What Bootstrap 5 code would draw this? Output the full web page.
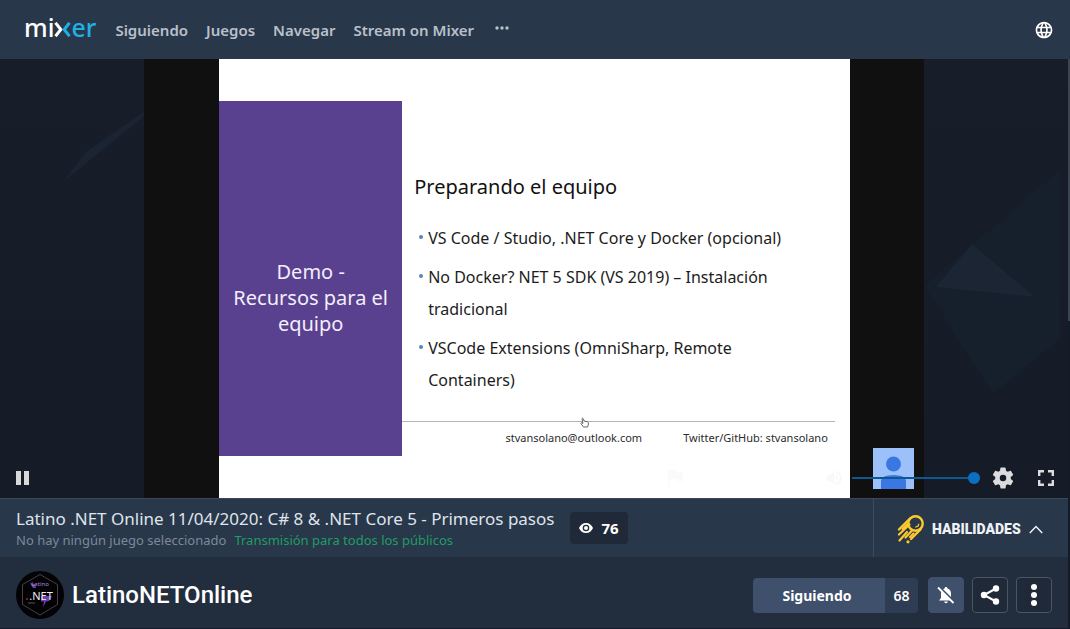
<!DOCTYPE html>
<html lang="es">
<head>
<meta charset="utf-8">
<meta name="viewport" content="width=device-width, initial-scale=1">
<title>LatinoNETOnline - Mixer</title>
<link href="https://cdn.jsdelivr.net/npm/bootstrap@5.3.0/dist/css/bootstrap.min.css" rel="stylesheet">
<style>
  body { font-family: "Noto Sans", "Open Sans", sans-serif; font-size: 14px; background: #141b28; color: #fff; }
  svg { display: block; flex: none; }
  .topbar { height: 59px; background: #29374a; padding: 0 16px 0 24px; }
  .brand { font-size: 25px; line-height: 30px; font-weight: 500; color: #fff; text-decoration: none; margin-bottom: 6px; }
  .brand svg { margin-top: 6px; }
  .brand-blue { color: #1fb0e6; }
  .topbar .nav { gap: 18px; margin-left: 19px; }
  .topbar .nav-link { font-size: 15px; line-height: 20px; font-weight: 600; color: #b9c0cb; padding: 0; }
  .page-body { margin-right: 2px; position: relative; }
  .scroll-thumb { position: absolute; top: 0; right: -2px; width: 2px; height: 262px; background: #3c4452; }
  .stage { background: linear-gradient(#171e2a, #151b27); min-height: 320px; }
  .stage-art { position: absolute; inset: 0; width: 100%; height: 100%; }
  .video { width: 73%; background: #101010; padding: 0 74px 0 75px; }
  .slide { background: #fff; color: #1c1c1c; padding: 42px 0; }
  .slide-side { width: 183px; background: #59418f; color: #f3eefb; font-size: 20px; line-height: 26px; padding-top: 38px; }
  .slide-main { padding-right: 15px; }
  .slide-text { padding: 73px 0 0 12px; }
  .slide h2 { font-size: 20px; line-height: 26px; margin: 0 0 22px; color: #111; font-weight: 400; }
  .slide li { font-size: 16px; line-height: 32px; margin-bottom: 7px; padding-left: 14px; position: relative; }
  .slide li::before { content: ""; position: absolute; left: 5px; top: 13px; width: 4px; height: 4px; border-radius: 50%; background: #5b84b8; }
  .slide-foot { border-top: 1px solid #b4b4b4; font-size: 11px; line-height: 18px; height: 35px; padding: 7px 7px 0 0; gap: 41px; color: #2c2c2c; }
  .hand { position: absolute; left: 41%; top: -5px; }
  .guest { position: absolute; right: 10px; bottom: 9px; width: 41px; height: 41px; }
  .controls { position: absolute; inset: auto 0 0 0; height: 40px; padding: 0 14px 0 16px; }
  .icon-btn { background: none; border: 0; padding: 0; color: #dcdcdc; line-height: 1; }
  .mute { margin-left: 140px; }
  .settings { margin: 0 22px 0 10px; }
  .volume { appearance: none; width: 128px; height: 12px; background: linear-gradient(#0f5790, #0f5790) center / 100% 2px no-repeat; margin: 0; }
  .volume::-webkit-slider-thumb { appearance: none; width: 12px; height: 12px; border-radius: 50%; background: #0b6fc2; }
  .infobar { background: #29374a; border-top: 1px solid #3a4860; height: 59px; padding-left: 16px; }
  .stream-title { font-size: 17px; line-height: 24px; font-weight: 400; margin: 0; color: #dfe4ec; }
  .stream-meta { font-size: 13px; line-height: 18px; color: #7d8898; gap: 8px; }
  .audience { color: #1f9d63; text-decoration: none; }
  .viewers { background: #1f2937; border-radius: 4px; height: 32px; padding: 0 9px; gap: 8px; font-size: 15px; font-weight: 700; }
  .skills { background: none; border: 0; border-left: 1px solid #3d4b60; color: #eef2f7; width: 195px; font-family: Roboto, sans-serif; font-size: 14px; font-weight: 900; padding: 2px 0 0 23px; gap: 8px; }
  .channel { background: #222d3d; height: 71px; padding: 5px 16px 0; margin-bottom: 1px; }
  .channel h1 { font-family: Roboto, sans-serif; font-size: 24px; line-height: 32px; font-weight: 500; margin: 0; }
  .follow { height: 35px; border-radius: 4px; overflow: hidden; margin-right: 2px; }
  .follow .btn { background: #3f506c; color: #fff; border: 0; border-radius: 0; font-size: 14px; font-weight: 700; width: 132px; padding: 0 4px 0 0; }
  .follow-count { background: #2f3d54; width: 33px; font-size: 14px; font-weight: 600; }
  .sq { width: 36px; height: 36px; border-radius: 4px; border: 1px solid #4a5566; padding: 0; background: #1f2938; color: #fff; }
  .sq.bell { background: #3f506c; border-color: #3f506c; }
</style>
</head>
<body class="d-flex flex-column min-vh-100">
<header class="topbar d-flex align-items-center">
  <a class="brand d-flex align-items-center" href="#" aria-label="mixer">
    <span>mi</span>
    <svg width="17" height="15" viewBox="0 0 17 15" fill="none" stroke-width="3"><path d="M1.5 .8 6.8 7.5 1.5 14.2" stroke="#fff"/><path d="M15.5 .8 10.2 7.5 15.5 14.2" stroke="#1fb0e6"/></svg>
    <span class="brand-blue">er</span>
  </a>
  <nav class="nav align-items-center text-nowrap">
    <a class="nav-link" href="#">Siguiendo</a>
    <a class="nav-link" href="#">Juegos</a>
    <a class="nav-link" href="#">Navegar</a>
    <a class="nav-link" href="#">Stream on Mixer</a>
    <button class="icon-btn pb-1" aria-label="Más"><svg width="18" height="4" viewBox="-3 0 18 4" fill="#b9c0cb"><circle cx="2" cy="2" r="1.7"/><circle cx="7" cy="2" r="1.7"/><circle cx="12" cy="2" r="1.7"/></svg></button>
  </nav>
  <button class="icon-btn ms-auto" aria-label="Idioma">
    <svg width="20" height="20" viewBox="0 0 24 24" fill="#fff"><path d="M11.99 2C6.47 2 2 6.48 2 12s4.47 10 9.99 10C17.52 22 22 17.52 22 12S17.52 2 11.99 2zm6.93 6h-2.95a15.65 15.65 0 0 0-1.38-3.56A8.03 8.03 0 0 1 18.92 8zM12 4.04c.83 1.2 1.48 2.53 1.91 3.96h-3.82c.43-1.43 1.08-2.76 1.91-3.96zM4.26 14C4.1 13.36 4 12.69 4 12s.1-1.36.26-2h3.38c-.08.66-.14 1.32-.14 2s.06 1.34.14 2H4.26zm.82 2h2.95c.32 1.25.78 2.45 1.38 3.56A7.99 7.99 0 0 1 5.08 16zm2.95-8H5.08a7.99 7.99 0 0 1 4.33-3.56A15.65 15.65 0 0 0 8.03 8zM12 19.96c-.83-1.2-1.48-2.53-1.91-3.96h3.82c-.43 1.43-1.08 2.76-1.91 3.96zM14.34 14H9.66c-.09-.66-.16-1.32-.16-2s.07-1.35.16-2h4.68c.09.65.16 1.32.16 2s-.07 1.34-.16 2zm.25 5.56c.6-1.11 1.06-2.31 1.38-3.56h2.95a8.03 8.03 0 0 1-4.33 3.56zM16.36 14c.08-.66.14-1.32.14-2s-.06-1.34-.14-2h3.38c.16.64.26 1.31.26 2s-.1 1.36-.26 2h-3.38z"/></svg>
  </button>
</header>

<main class="page-body flex-grow-1 d-flex flex-column">
  <div class="scroll-thumb"></div>
  <section class="stage flex-grow-1 d-flex justify-content-center position-relative">
    <svg class="stage-art" viewBox="0 0 1068 439" preserveAspectRatio="none">
      <path d="M63 123 87 92 144 53V57Z" fill="#1a2432"/>
      <path d="M924 227 1060 110V280L993 335Z" fill="#161f2c"/>
      <path d="M972 185 1035 238 936 228Z" fill="#1c2533"/>
    </svg>
    <div class="video d-flex position-relative">
      <article class="slide flex-grow-1 d-flex">
        <div class="slide-side d-flex align-items-center justify-content-center text-center"><div>Demo -<br>Recursos para el<br>equipo</div></div>
        <div class="slide-main flex-grow-1 d-flex flex-column justify-content-between text-nowrap">
          <div class="slide-text">
            <h2>Preparando el equipo</h2>
            <ul class="list-unstyled m-0">
              <li>VS Code / Studio, .NET Core y Docker (opcional)</li>
              <li>No Docker? NET 5 SDK (VS 2019) – Instalación<br>tradicional</li>
              <li>VSCode Extensions (OmniSharp, Remote<br>Containers)</li>
            </ul>
          </div>
          <div class="slide-foot d-flex justify-content-end position-relative">
            <svg class="hand" width="9" height="11" viewBox="0 0 9 11" fill="#fff" stroke="#666"><path d="M2 1.5C3 .5 3.5 2 4 4l3.5.8C9 5.500 8.500 8 7.500 10H3.500L.8 6.500 1.500 5.500 3 6.500Z"/></svg>
            <span>stvansolano@outlook.com</span><span>Twitter/GitHub: stvansolano</span>
          </div>
        </div>
      </article>
      <svg class="guest" viewBox="0 0 41 41"><path fill="#9cc1fa" d="M0 0h41v41H0z"/><circle cx="20.500" cy="16" r="7.500" fill="#3b77e3"/><path fill="#3b77e3" d="M8 41V33q0-6 12.500-6T33 33v8Z"/></svg>
    </div>
    <div class="controls d-flex align-items-center">
      <button class="icon-btn" aria-label="Pausa"><svg width="13" height="14" viewBox="0 0 13 14" fill="#d9d9d9"><path d="M0 0h5v14H0zM8 0h5v14H8z"/></svg></button>
      <button class="icon-btn ms-auto" aria-label="Denunciar"><svg width="18" height="18" viewBox="0 0 18 18" fill="#fafafa"><path d="M2 1h8l1 2h6v9h-6l-1-2H4v8H2z"/></svg></button>
      <button class="icon-btn mute" aria-label="Silenciar"><svg width="20" height="20" viewBox="0 0 24 24" fill="#f8f8f8"><path d="M3 9v6h4l5 5V4L7 9H3zm13.500 3A4.500 4.500 0 0 0 14 7.970v8.050A4.500 4.500 0 0 0 16.500 12zM14 3.230v2.060a7 7 0 0 1 0 13.420v2.060a9 9 0 0 0 0-17.540z"/></svg></button>
      <input class="volume ms-2" type="range" min="0" max="100" value="100" aria-label="Volumen">
      <button class="icon-btn settings" aria-label="Ajustes"><svg width="26" height="26" viewBox="0 0 24 24" fill="#dcdcdc"><path d="M19.140 12.940c.04-.3.06-.61.06-.94s-.02-.64-.07-.94l2.030-1.580a.49.49 0 0 0 .12-.61l-1.920-3.320a.49.49 0 0 0-.59-.22l-2.390.96c-.5-.38-1.030-.7-1.620-.94l-.36-2.540a.48.48 0 0 0-.48-.41h-3.840a.48.48 0 0 0-.47.41l-.36 2.540c-.59.24-1.130.57-1.620.94l-2.390-.96a.48.48 0 0 0-.59.22L2.740 8.870a.48.48 0 0 0 .12.610l2.030 1.580c-.05.3-.09.63-.09.94s.02.64.07.94l-2.030 1.580a.49.49 0 0 0-.12.610l1.920 3.320c.12.22.37.29.59.22l2.390-.96c.5.38 1.030.7 1.620.94l.36 2.540c.05.24.24.41.48.41h3.840c.24 0 .44-.17.47-.41l.36-2.540c.59-.24 1.130-.56 1.620-.94l2.390.96c.22.08.47 0 .59-.22l1.920-3.320a.48.48 0 0 0-.12-.61l-2.010-1.580zM12 15a3 3 0 1 1 0-6 3 3 0 0 1 0 6z"/></svg></button>
      <button class="icon-btn" aria-label="Pantalla completa"><svg width="16" height="16" viewBox="0 0 16 16" fill="none" stroke="#dcdcdc" stroke-width="2.400"><path d="M1.200 6V1.200H6M10 1.200h4.800V6M14.800 10v4.800H10M6 14.800H1.200V10"/></svg></button>
    </div>
  </section>

  <section class="infobar d-flex text-nowrap">
    <div class="d-flex align-items-center flex-grow-1 gap-3">
      <div>
        <h2 class="stream-title">Latino .NET Online 11/04/2020: C# 8 &amp; .NET Core 5 - Primeros pasos</h2>
        <div class="stream-meta d-flex"><span>No hay ningún juego seleccionado</span><a class="audience" href="#">Transmisión para todos los públicos</a></div>
      </div>
      <div class="viewers d-flex align-items-center">
        <svg width="14" height="10" viewBox="0 0 14 10"><path fill="#fff" fill-rule="evenodd" d="M7 0C3.800 0 1.200 2 0 5c1.200 3 3.800 5 7 5s5.800-2 7-5c-1.200-3-3.800-5-7-5zm0 8.300A3.300 3.300 0 1 1 7 1.700a3.300 3.300 0 0 1 0 6.600zM7 3a2 2 0 1 0 0 4 2 2 0 0 0 0-4z"/></svg>
        <span>76</span>
      </div>
    </div>
    <button class="skills d-flex align-items-center">
      <svg width="27" height="29" viewBox="0 0 27 29" fill="none" stroke="#fcc92f" stroke-linecap="round"><circle cx="18.500" cy="8.500" r="7.200" stroke-width="2.400"/><path d="M13 3.500 2 14.500M23.500 14.500 14 24" stroke-width="2.400"/><path d="M12.500 9.500 2 19.500M10 17 2.500 25.500M15 15.500 8.500 22.500M16.500 18.500 13 22" stroke-width="2.200"/><path d="M11 9 6 14" stroke-width="3"/><circle cx="11" cy="26.800" r="1.600" fill="#fcc92f" stroke="none"/><path d="M21.800 9a3.300 3.300 0 0 1-3.300 3" stroke-width="1.200"/></svg>
      <span>HABILIDADES</span>
      <svg width="14" height="9" viewBox="0 0 14 9" fill="none" stroke="#eef2f7" stroke-width="1.500"><path d="M.8 8 7 1.500 13.200 8"/></svg>
    </button>
  </section>

  <section class="channel d-flex align-items-center text-nowrap gap-2">
    <svg width="48" height="48" viewBox="0 0 48 48"><circle cx="24" cy="24" r="24" fill="#030305"/><path d="M24 3.500 41.500 13.500v20L24 44 6.500 33.500v-20Z" fill="none" stroke="#57524f" stroke-width=".8"/><path d="M25 25h11l-3 5-3 .5-3 6 1-6h-3z" fill="#6a3fae"/><path d="M14 12l5 1 1 4h-3z" fill="#6a3fae"/><text x="24" y="15" font-family="Noto Sans" font-size="6" fill="#a98bd8" text-anchor="middle">Latino</text><text x="25" y="29" font-family="Noto Sans" font-size="11" fill="#eee" text-anchor="middle">.NET</text><path d="M12 32h7" stroke="#555"/><circle cx="11" cy="28" r="1" fill="#b02040"/></svg>
    <h1>LatinoNETOnline</h1>
    <div class="d-flex ms-auto gap-2 align-items-center">
      <div class="follow d-flex"><button class="btn">Siguiendo</button><span class="follow-count d-flex align-items-center justify-content-center">68</span></div>
      <button class="sq bell d-flex align-items-center justify-content-center" aria-label="Notificaciones"><svg width="18" height="18" viewBox="0 0 18 18"><path fill="#fff" d="M9 1c-1 0-1.400.6-1.400 1.500C5 3.200 4 5.200 4 7.500V12l-2 2.500h14L14 12V7.500c0-2.300-1-4.300-3.600-5C10.400 1.600 10 1 9 1zM7.200 15.500a1.800 1.800 0 0 0 3.600 0z"/><path d="M2.500 1 18 16.500" stroke="#3f506c" stroke-width="2"/><path d="M1 1.500 16.500 17" stroke="#fff" stroke-width="1.800"/></svg></button>
      <button class="sq d-flex align-items-center justify-content-center" aria-label="Compartir"><svg width="20" height="20" viewBox="0 0 20 20" fill="#fff"><path d="M16 3.500 4 10l12 6.500" fill="none" stroke="#fff" stroke-width="2"/><circle cx="16" cy="3.500" r="3.200"/><circle cx="4" cy="10" r="3.200"/><circle cx="16" cy="16.500" r="3.200"/></svg></button>
      <button class="sq d-flex align-items-center justify-content-center" aria-label="Opciones"><svg width="6" height="22" viewBox="0 0 6 22" fill="#fff"><circle cx="3" cy="3" r="3"/><circle cx="3" cy="11" r="3"/><circle cx="3" cy="19" r="3"/></svg></button>
    </div>
  </section>
</main>
<script src="https://cdn.jsdelivr.net/npm/bootstrap@5.3.0/dist/js/bootstrap.bundle.min.js"></script>
</body>
</html>
